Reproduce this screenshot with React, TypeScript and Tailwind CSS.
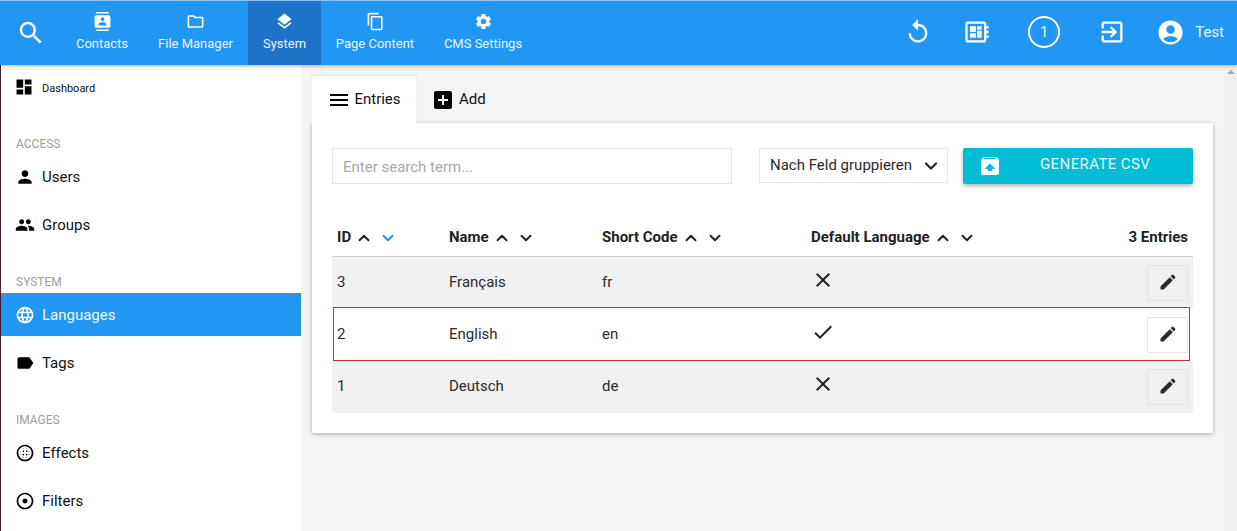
import React from "react";
import { ChevronUp, ChevronDown } from "lucide-react";
import {
  MdSearch, MdContacts, MdOutlineFolder, MdLayers, MdContentCopy, MdSettings, MdReplay,
  MdOutlineDeveloperBoard, MdOutlineExitToApp, MdAccountCircle, MdDashboard, MdPerson, MdPeople,
  MdLanguage, MdLabel, MdBlurCircular, MdAdjust, MdMenu, MdAddBox,
  MdClose, MdCheck, MdEdit, MdUnarchive,
} from "react-icons/md";

const font = { fontFamily: "Roboto, 'Liberation Sans', sans-serif" };

function NavTab({ icon, label, active, w }: { icon: React.ReactNode; label: string; active?: boolean; w: string }) {
  return (
    <div className={`flex h-[64px] flex-col items-center pt-[10px] text-[13px] leading-[18px] text-[#e9f4fe] ${w} ${active ? "bg-[#1e73c9]" : ""}`}>
      <div className="flex h-[20px] items-center text-white">{icon}</div>
      <div className="mt-[4px] whitespace-nowrap">{label}</div>
    </div>
  );
}

function Side({ icon, label, active }: { icon: React.ReactNode; label: string; active?: boolean }) {
  return (
    <div className={`mb-[5px] flex h-[43px] items-center pl-[14px] text-[15px] ${active ? "bg-[#2196f3] text-[#f1f8fe]" : "text-[#111]"}`}>
      <div className={`flex w-[27px] items-center ${active ? "text-white" : "text-black"}`}>{icon}</div>
      <span className="pt-[2px]">{label}</span>
    </div>
  );
}

function Section({ label, first }: { label: string; first?: boolean }) {
  return <div className={`mb-[3px] h-[16px] pl-[15px] text-[12px] leading-[16px] text-[#9e9e9e] ${first ? "mt-[25px]" : "mt-[28px]"}`}>{label}</div>;
}

function Sort({ active }: { active?: boolean }) {
  return (
    <span className="ml-[4px] flex items-center">
      <ChevronUp size={18} strokeWidth={2.6} className="text-[#222]" />
      <ChevronDown size={18} strokeWidth={2.6} className={`ml-[6px] ${active ? "text-[#2196f3]" : "text-[#222]"}`} />
    </span>
  );
}

function Cells({ id, name, code, on, alt }: { id: string; name: string; code: string; on?: boolean; alt?: boolean }) {
  return (
    <>
      <span className="-mt-[2px]">{id}</span>
      <span className="-mt-[2px]">{name}</span>
      <span className="-mt-[2px]">{code}</span>
      <span className="-mt-[7px] flex">{on ? <MdCheck size={24} className="text-[#222]" /> : <MdClose size={24} className="text-[#222]" />}</span>
      <span className={`flex h-[36px] w-[41px] items-center justify-center rounded-[2px] border border-[#e2e2e2] pb-[2px] ${alt ? "bg-[#f1f1f1]" : "bg-white"}`}>
        <MdEdit size={20} className="text-[#2b2b2b]" />
      </span>
    </>
  );
}

function Row(props: { id: string; name: string; code: string; on?: boolean }) {
  return (
    <div className="grid h-[52px] grid-cols-[112px_153px_209px_1fr_auto] items-center bg-[#f1f1f1] pl-[5px] pr-[5px] text-[15px] text-[#2b2b2b]">
      <Cells {...props} alt />
    </div>
  );
}

function BoxedRow(props: { id: string; name: string; code: string; on?: boolean }) {
  return (
    <div className="relative z-[1] -mt-[2px] ml-[1px] mr-[3px] h-[54px] bg-[#c62f36] p-[1px]">
      <div className="grid h-[52px] grid-cols-[112px_153px_209px_1fr_auto] items-center bg-white pl-[3px] pr-[1px] pt-[2px] text-[15px] text-[#2b2b2b]">
        <Cells {...props} />
      </div>
    </div>
  );
}

export default function App() {
  return (
    <div className="flex h-[531px] w-[1237px] flex-col overflow-hidden bg-[#f4f4f4]" style={font}>
      <header className="relative z-10 flex h-[65px] shrink-0 items-center border-t border-t-[#8fc4f0] bg-[#2196f3] shadow-[0_1px_4px_rgba(0,0,0,0.3)]">
        <div className="flex w-[61px] justify-center pb-[1px] text-white"><MdSearch size={30} /></div>
        <NavTab w="w-[82px]" icon={<MdContacts size={19} />} label="Contacts" />
        <NavTab w="w-[105px]" icon={<MdOutlineFolder size={19} />} label="File Manager" />
        <NavTab w="w-[73px]" active icon={<MdLayers size={19} />} label="System" />
        <NavTab w="w-[108px]" icon={<MdContentCopy size={19} />} label="Page Content" />
        <NavTab w="w-[108px]" icon={<MdSettings size={19} />} label="CMS Settings" />
        <div className="ml-auto flex items-center pb-[2px] pr-[13px] text-white">
          <MdReplay size={28} />
          <MdOutlineDeveloperBoard size={28} className="ml-[31px]" />
          <div className="ml-[37px] flex h-[32px] w-[32px] items-center justify-center rounded-full border-[2px] border-white text-[14px] text-[#e9f4fe]">1</div>
          <MdOutlineExitToApp size={28} className="ml-[38px]" />
          <MdAccountCircle size={29} className="ml-[30px]" />
          <span className="ml-[10px] text-[15px] text-[#e9f4fe]">Test</span>
        </div>
      </header>
      <div className="flex min-h-0 flex-1">
        <aside className="w-[301px] shrink-0 border-l border-l-[#3b1f3b] bg-white">
          <div className="flex h-[46px] items-center pl-[13px] text-[11px] text-[#111]">
            <MdDashboard size={20} className="mr-[8px] -mt-[3px] text-black" />
            <span className="pt-[3px]">Dashboard</span>
          </div>
          <Section first label="ACCESS" />
          <Side icon={<MdPerson size={20} />} label="Users" />
          <Side icon={<MdPeople size={20} />} label="Groups" />
          <Section label="SYSTEM" />
          <Side active icon={<MdLanguage size={20} />} label="Languages" />
          <Side icon={<MdLabel size={20} />} label="Tags" />
          <Section label="IMAGES" />
          <Side icon={<MdBlurCircular size={20} />} label="Effects" />
          <Side icon={<MdAdjust size={20} />} label="Filters" />
        </aside>
        <main className="min-w-0 flex-1 pl-[11px] pr-[11px] pt-[11px]">
          <div className="flex h-[47px] text-[15px] text-[#111]">
            <div className="flex w-[104px] items-center justify-center gap-[3px] bg-white shadow-[0_-1px_2px_rgba(0,0,0,0.06)]">
              <MdMenu size={24} className="text-black" />
              <span>Entries</span>
            </div>
            <div className="ml-[15px] flex items-center gap-[4px]">
              <MdAddBox size={24} className="text-black" />
              <span>Add</span>
            </div>
          </div>
          <section className="h-[310px] w-[901px] rounded-b-[2px] bg-white px-[20px] pt-[25px] shadow-[0_1px_4px_rgba(0,0,0,0.3)]">
            <div className="flex items-start">
              <div className="flex h-[36px] w-[400px] items-center border border-[#e4e4e4] pl-[10px] pt-[2px] text-[15px] text-[#a8a8a8]">Enter search term...</div>
              <div className="ml-[27px] flex h-[35px] w-[189px] items-center justify-between border border-[#e8e8e8] pl-[10px] pr-[6px] text-[15px] text-[#2b2b2b]">
                <span>Nach Feld gruppieren</span>
                <ChevronDown size={20} strokeWidth={2.6} className="text-[#222]" />
              </div>
              <div className="ml-[15px] flex h-[36px] w-[230px] items-center rounded-[2px] bg-[#00bcd4] pl-[15px] text-[15px] tracking-[0.4px] text-[#e6f8fa] shadow-[0_2px_4px_rgba(0,0,0,0.3)]">
                <MdUnarchive size={24} className="text-white" />
                <span className="ml-[38px] pb-[4px]">GENERATE CSV</span>
              </div>
            </div>
            <div className="mt-[35px] grid h-[38px] grid-cols-[112px_153px_209px_1fr_auto] items-center border-b border-b-[#d0d0d0] pl-[5px] pr-[5px] text-[15px] font-bold text-[#222]">
              <span className="flex items-center">ID<Sort active /></span>
              <span className="flex items-center">Name<Sort /></span>
              <span className="flex items-center">Short Code<Sort /></span>
              <span className="flex items-center">Default Language<Sort /></span>
              <span>3 Entries</span>
            </div>
            <Row id="3" name="Français" code="fr" />
            <BoxedRow on id="2" name="English" code="en" />
            <Row id="1" name="Deutsch" code="de" />
          </section>
        </main>
        <div className="relative w-[13px] shrink-0 bg-[#f1f1f1]">
          <div className="mx-auto mt-[5px] h-0 w-0 border-x-[4px] border-b-[4px] border-x-transparent border-b-[#a8a8a8]" />
        </div>
      </div>
    </div>
  );
}
